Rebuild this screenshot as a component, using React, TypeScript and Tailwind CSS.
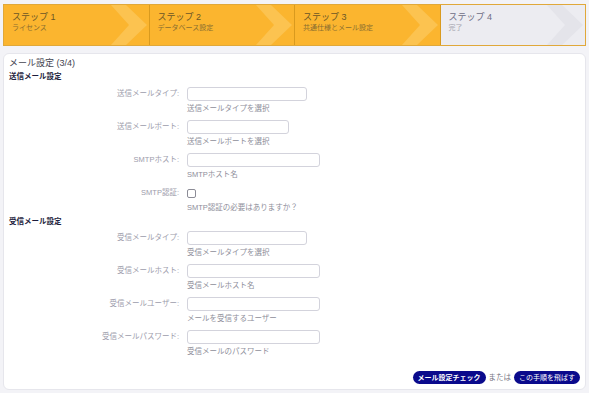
import React from 'react';

const font = { fontFamily: '"Liberation Sans", "Noto Sans CJK JP", sans-serif' };

const steps = [
  { title: 'ステップ 1', sub: 'ライセンス', done: true },
  { title: 'ステップ 2', sub: 'データベース設定', done: true },
  { title: 'ステップ 3', sub: '共通仕様とメール設定', done: true },
  { title: 'ステップ 4', sub: '完了', done: false },
];

const Step: React.FC<{ title: string; sub: string; done: boolean; last: boolean }> = ({ title, sub, done, last }) => (
  <div
    className={
      'relative flex-1 h-full overflow-hidden ' +
      (done ? 'bg-[#fbb52f] ' : 'bg-[#ececf1] ') +
      (last ? '' : 'border-r border-[#d99a1e]')
    }
  >
    {/* chevron decoration */}
    <svg className="absolute right-0 top-0 h-full w-[40px]" viewBox="0 0 40 42" preserveAspectRatio="none">
      <polygon
        points="2,0 17,0 38,21 17,42 2,42 20,21"
        fill={done ? '#fcc350' : '#e4e4ea'}
      />
    </svg>
    <div className="relative pl-[8px] pt-[6px]">
      <div className={'text-[9px] leading-[12px] ' + (done ? 'text-[#6b5626]' : 'text-[#6e6e86]')}>{title}</div>
      <div className={'text-[7px] leading-[10px] ' + (done ? 'text-[#8a6e30]' : 'text-[#a4a4ae]')}>{sub}</div>
    </div>
  </div>
);

const Field: React.FC<{ label: string; help: string; width?: string; checkbox?: boolean }> = ({ label, help, width, checkbox }) => (
  <div className="grid grid-cols-[170px_1fr] gap-x-2 mb-[5px]">
    <div className="h-[14px] leading-[14px] text-right text-[7.5px] text-[#9c9cab]">{label}</div>
    <div className="flex flex-col">
      {checkbox ? (
        <div className="h-[14px] flex items-center">
          <div className="w-[9px] h-[9px] border border-[#8c8c96] rounded-[2px] bg-white" />
        </div>
      ) : (
        <div className={'h-[14px] border border-[#d3d3dc] rounded-[3px] bg-white ' + width} />
      )}
      <div className="mt-[1px] h-[13px] leading-[13px] text-[7.5px] text-[#8e8e9a]">{help}</div>
    </div>
  </div>
);

export default function App() {
  return (
    <div className="w-[589px] h-[393px] bg-[#f3f3f7] px-[3px] pt-[4px] flex flex-col overflow-hidden" style={font}>
      <div className="h-[42px] flex border border-[#e0a83a] shrink-0">
        {steps.map((s, i) => (
          <Step key={i} {...s} last={i === steps.length - 1} />
        ))}
      </div>

      <div className="mt-[7px] h-[337px] bg-white rounded-[6px] border border-[#e6e6ec] px-[5px] pt-[2px] pb-[5px] flex flex-col">
        <div className="h-[14px] leading-[14px] text-[9px] text-[#444450]">メール設定 (3/4)</div>
        <div className="mt-[1px] h-[12px] leading-[12px] text-[7.5px] font-bold text-[#1c1c3c]">送信メール設定</div>

        <div className="mt-[4px]">
          <Field label="送信メールタイプ:" help="送信メールタイプを選択" width="w-[120px]" />
          <Field label="送信メールポート:" help="送信メールポートを選択" width="w-[102px]" />
          <Field label="SMTPホスト:" help="SMTPホスト名" width="w-[133px]" />
          <Field label="SMTP認証:" help="SMTP認証の必要はありますか？" checkbox />
        </div>

        <div className="-mt-[3px] h-[12px] leading-[12px] text-[7.5px] font-bold text-[#1c1c3c]">受信メール設定</div>

        <div className="mt-[3px]">
          <Field label="受信メールタイプ:" help="受信メールタイプを選択" width="w-[120px]" />
          <Field label="受信メールホスト:" help="受信メールホスト名" width="w-[133px]" />
          <Field label="受信メールユーザー:" help="メールを受信するユーザー" width="w-[133px]" />
          <Field label="受信メールパスワード:" help="受信メールのパスワード" width="w-[133px]" />
        </div>

        <div className="mt-auto flex items-center justify-end gap-[3px]">
          <button className="h-[13px] px-[5px] rounded-full bg-[#0a0a8c] text-white text-[7px] leading-[13px] font-bold">
            メール設定チェック
          </button>
          <span className="text-[7.5px] text-[#777784]">または</span>
          <button className="h-[13px] px-[5px] rounded-full bg-[#0a0a8c] text-white text-[7px] leading-[13px]">
            この手順を飛ばす
          </button>
        </div>
      </div>
    </div>
  );
}
